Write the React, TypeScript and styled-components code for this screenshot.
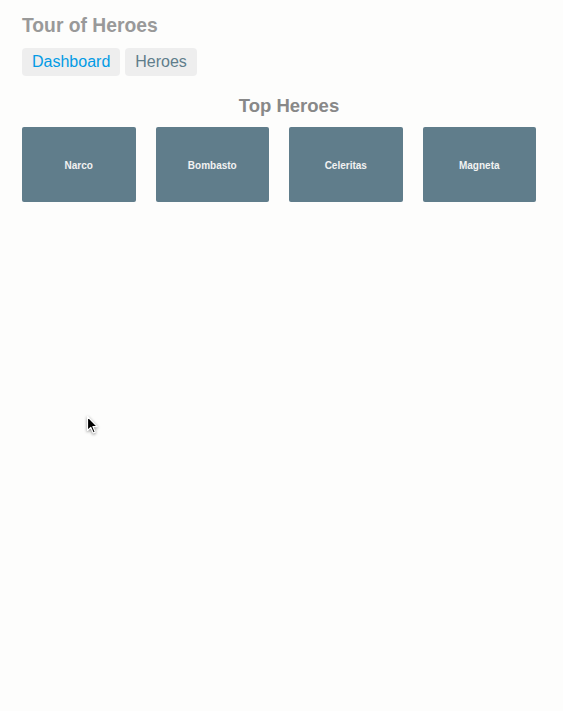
import React from "react";
import styled, { createGlobalStyle } from "styled-components";

const GlobalStyle = createGlobalStyle`
  html, body {
    margin: 0;
    padding: 0;
    background: #fdfdfc;
  }
  body {
    font-family: "Liberation Sans", Arial, Helvetica, sans-serif;
    min-height: 711px;
  }
  * { box-sizing: border-box; }
`;

const Page = styled.div`
  position: relative;
  min-height: 711px;
  padding: 15px 7px 0 22px;
  background: #fdfdfc;
`;

const Title = styled.h1`
  margin: 0;
  font-size: 19.3px;
  font-weight: bold;
  color: #999;
  line-height: 21px;
`;

const Nav = styled.nav`
  display: flex;
  gap: 5px;
  margin-top: 12px;
`;

const NavLink = styled.a<{ $active?: boolean }>`
  display: block;
  padding: 5px 10px;
  background: #eee;
  border-radius: 4px;
  font-size: 16px;
  line-height: 18px;
  text-decoration: none;
  color: ${(p) => (p.$active ? "#039be5" : "#607d8b")};
  cursor: pointer;
`;

const SectionTitle = styled.h3`
  margin: 19px 0 0;
  text-align: center;
  font-size: 18.5px;
  line-height: 21px;
  font-weight: bold;
  color: #888;
`;

const Grid = styled.div`
  display: grid;
  grid-template-columns: repeat(4, 1fr);
  column-gap: 20px;
  padding-right: 20px;
  margin-top: 11px;
`;

const Tile = styled.div`
  height: 75px;
  padding-top: 2px;
  background: #607d8b;
  border-radius: 2px;
  display: flex;
  align-items: center;
  justify-content: center;
  color: #f2f2f2;
  font-size: 10px;
  font-weight: bold;
`;

const Cursor = styled.svg`
  position: absolute;
  left: 86px;
  top: 415px;
  filter: drop-shadow(0 1px 1.5px rgba(0, 0, 0, 0.45));
`;

const heroes = ["Narco", "Bombasto", "Celeritas", "Magneta"];

export default function App() {
  return (
    <>
      <GlobalStyle />
      <Page>
        <Title>Tour of Heroes</Title>
        <Nav>
          <NavLink $active>Dashboard</NavLink>
          <NavLink>Heroes</NavLink>
        </Nav>
        <SectionTitle>Top Heroes</SectionTitle>
        <Grid>
          {heroes.map((h) => (
            <Tile key={h}>{h}</Tile>
          ))}
        </Grid>
        <Cursor width="13" height="20" viewBox="0 0 13 20">
          <path
            d="M1.5 1.5 L1.5 15.5 L4.8 12.4 L7.2 18 L9.2 17.1 L6.9 11.6 L11.3 11.6 Z"
            fill="#000"
            stroke="#fff"
            strokeWidth="1.2"
            strokeLinejoin="round"
          />
        </Cursor>
      </Page>
    </>
  );
}
